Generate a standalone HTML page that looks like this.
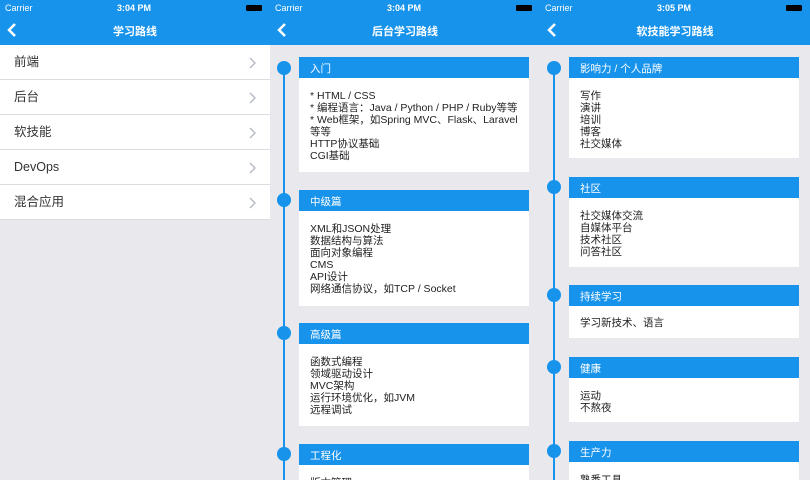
<!DOCTYPE html>
<html><head><meta charset="utf-8"><style>
*{margin:0;padding:0;box-sizing:border-box}
body{width:810px;height:480px;overflow:hidden;background:#e8e8ed;font-family:"Liberation Sans","Noto Sans CJK SC",sans-serif;position:relative}
.p{position:absolute;top:0;width:270px;height:480px;overflow:hidden;background:#e8e8ed}
.nav{position:absolute;left:0;top:0;width:270px;height:45px;background:#1793ec;color:#fff}
.sb{position:absolute;top:3px;font-size:9px}
.title{position:absolute;top:23px;width:100%;text-align:center;font-size:11px;font-weight:bold}
.back{position:absolute;left:7px;top:22px}
.row{position:absolute;left:0;width:270px;height:35px;background:#fff;border-bottom:1px solid #dcdcdf;font-size:12.5px;color:#333;padding:0 0 0 14px;line-height:34px}
.row svg{position:absolute;right:14px;top:12px}
.line{position:absolute;width:2px;top:45px;bottom:0;background:#1793ec}
.dot{position:absolute;width:14px;height:14px;border-radius:7px;background:#1793ec}
.card{position:absolute;width:230px;background:#fff}
.hd{height:21px;background:#1793ec;color:#fff;font-size:10.5px;padding:4px 0 0 11px}
.bd{font-size:10.5px;line-height:12px;color:#222;padding:12px 0 0 11px}
</style></head><body>

<div class="p" style="left:0">
<div class="nav"><span class="sb" style="left:5px">Carrier</span><span class="sb" style="left:117px;font-weight:bold">3:04 PM</span><span style="position:absolute;right:8px;top:5px;width:16px;height:6px;background:#000;border-radius:1px"></span>
<svg class="back" width="10" height="16"><path d="M8 2L2 8l6 6" stroke="#fff" stroke-width="2.5" fill="none"/></svg><div class="title">学习路线</div></div>
<div class="row" style="top:45px">前端<svg width="7" height="12"><path d="M1 1l5 5-5 5" stroke="#b8bcc6" stroke-width="1.5" fill="none"/></svg></div>
<div class="row" style="top:80px">后台<svg width="7" height="12"><path d="M1 1l5 5-5 5" stroke="#b8bcc6" stroke-width="1.5" fill="none"/></svg></div>
<div class="row" style="top:115px">软技能<svg width="7" height="12"><path d="M1 1l5 5-5 5" stroke="#b8bcc6" stroke-width="1.5" fill="none"/></svg></div>
<div class="row" style="top:150px">DevOps<svg width="7" height="12"><path d="M1 1l5 5-5 5" stroke="#b8bcc6" stroke-width="1.5" fill="none"/></svg></div>
<div class="row" style="top:185px">混合应用<svg width="7" height="12"><path d="M1 1l5 5-5 5" stroke="#b8bcc6" stroke-width="1.5" fill="none"/></svg></div>
</div>

<div class="p" style="left:270px">
<div class="nav"><span class="sb" style="left:5px">Carrier</span><span class="sb" style="left:117px;font-weight:bold">3:04 PM</span><span style="position:absolute;right:8px;top:5px;width:16px;height:6px;background:#000;border-radius:1px"></span>
<svg class="back" width="10" height="16"><path d="M8 2L2 8l6 6" stroke="#fff" stroke-width="2.5" fill="none"/></svg><div class="title">后台学习路线</div></div>
<div class="line" style="left:13px;top:68px"></div>
<div class="dot" style="left:7px;top:61px"></div>
<div class="dot" style="left:7px;top:193px"></div>
<div class="dot" style="left:7px;top:326px"></div>
<div class="dot" style="left:7px;top:447px"></div>
<div class="card" style="left:29px;top:57px;height:115px"><div class="hd">入门</div><div class="bd">* HTML / CSS<br>* 编程语言：Java / Python / PHP / Ruby等等<br>* Web框架，如Spring MVC、Flask、Laravel<br>等等<br>HTTP协议基础<br>CGI基础</div></div>
<div class="card" style="left:29px;top:190px;height:116px"><div class="hd">中级篇</div><div class="bd">XML和JSON处理<br>数据结构与算法<br>面向对象编程<br>CMS<br>API设计<br>网络通信协议，如TCP / Socket</div></div>
<div class="card" style="left:29px;top:323px;height:103px"><div class="hd">高级篇</div><div class="bd">函数式编程<br>领域驱动设计<br>MVC架构<br>运行环境优化，如JVM<br>远程调试</div></div>
<div class="card" style="left:29px;top:444px;height:60px"><div class="hd">工程化</div><div class="bd">版本管理</div></div>
</div>

<div class="p" style="left:540px">
<div class="nav"><span class="sb" style="left:5px">Carrier</span><span class="sb" style="left:117px;font-weight:bold">3:05 PM</span><span style="position:absolute;right:8px;top:5px;width:16px;height:6px;background:#000;border-radius:1px"></span>
<svg class="back" width="10" height="16"><path d="M8 2L2 8l6 6" stroke="#fff" stroke-width="2.5" fill="none"/></svg><div class="title">软技能学习路线</div></div>
<div class="line" style="left:13px;top:68px"></div>
<div class="dot" style="left:7px;top:61px"></div>
<div class="dot" style="left:7px;top:180px"></div>
<div class="dot" style="left:7px;top:288px"></div>
<div class="dot" style="left:7px;top:360px"></div>
<div class="dot" style="left:7px;top:444px"></div>
<div class="card" style="left:29px;top:57px;height:101px"><div class="hd">影响力 / 个人品牌</div><div class="bd">写作<br>演讲<br>培训<br>博客<br>社交媒体</div></div>
<div class="card" style="left:29px;top:177px;height:90px"><div class="hd">社区</div><div class="bd">社交媒体交流<br>自媒体平台<br>技术社区<br>问答社区</div></div>
<div class="card" style="left:29px;top:285px;height:53px"><div class="hd">持续学习</div><div class="bd" style="padding-top:11px">学习新技术、语言</div></div>
<div class="card" style="left:29px;top:357px;height:65px"><div class="hd">健康</div><div class="bd">运动<br>不熬夜</div></div>
<div class="card" style="left:29px;top:441px;height:60px"><div class="hd">生产力</div><div class="bd">熟悉工具</div></div>
</div>
</body></html>
